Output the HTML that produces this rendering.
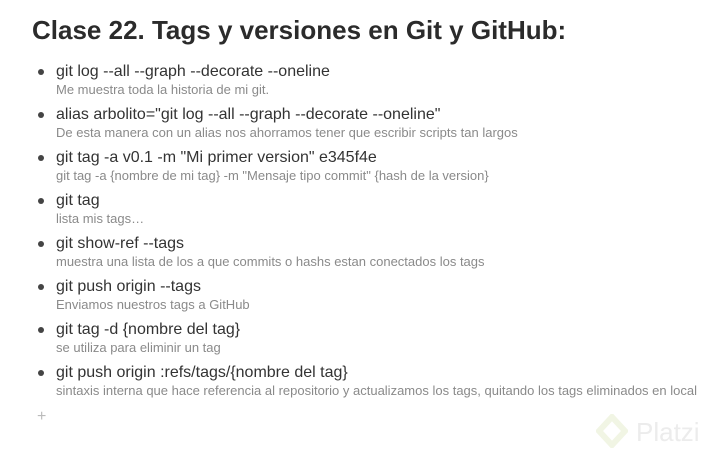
<!DOCTYPE html><html><head><style>
body{margin:0;width:724px;height:458px;background:#fff;font-family:"Liberation Sans",sans-serif;position:relative;overflow:hidden}
h1{position:absolute;left:32px;top:15px;margin:0;font-size:26px;font-weight:bold;color:#2b2b2b;white-space:nowrap}
.i{position:absolute;left:56px;white-space:nowrap}
.m{font-size:16px;color:#333;line-height:18px}
.s{font-size:13px;color:#8a8a8a;line-height:15px;margin-top:1px}
.b{position:absolute;left:-18px;top:6px;width:6px;height:6px;border-radius:50%;background:#444}
</style></head><body>
<h1>Clase 22. Tags y versiones en Git y GitHub:</h1>
<div class="i" style="top:63px"><span class="b"></span><div class="m">git log --all --graph --decorate --oneline</div><div class="s">Me muestra toda la historia de mi git.</div></div>
<div class="i" style="top:106px"><span class="b"></span><div class="m">alias arbolito="git log --all --graph --decorate --oneline"</div><div class="s">De esta manera con un alias nos ahorramos tener que escribir scripts tan largos</div></div>
<div class="i" style="top:149px"><span class="b"></span><div class="m">git tag -a v0.1 -m "Mi primer version" e345f4e</div><div class="s">git tag -a {nombre de mi tag} -m "Mensaje tipo commit" {hash de la version}</div></div>
<div class="i" style="top:192px"><span class="b"></span><div class="m">git tag</div><div class="s">lista mis tags…</div></div>
<div class="i" style="top:235px"><span class="b"></span><div class="m">git show-ref --tags</div><div class="s">muestra una lista de los a que commits o hashs estan conectados los tags</div></div>
<div class="i" style="top:278px"><span class="b"></span><div class="m">git push origin --tags</div><div class="s">Enviamos nuestros tags a GitHub</div></div>
<div class="i" style="top:321px"><span class="b"></span><div class="m">git tag -d {nombre del tag}</div><div class="s">se utiliza para eliminir un tag</div></div>
<div class="i" style="top:364px"><span class="b"></span><div class="m">git push origin :refs/tags/{nombre del tag}</div><div class="s">sintaxis interna que hace referencia al repositorio y actualizamos los tags, quitando los tags eliminados en local</div></div>
<div style="position:absolute;left:37px;top:408px;font-size:16px;color:#bbb">+</div>
<svg style="position:absolute;left:596px;top:414px" width="32" height="34" viewBox="0 0 32 34"><path d="M16 3 L29 17 L16 31 L3 17 Z" fill="none" stroke="#f1f5e4" stroke-width="6"/></svg>
<div style="position:absolute;left:636px;top:417px;font-size:26px;color:#ececec">Platzi</div>
</body></html>
